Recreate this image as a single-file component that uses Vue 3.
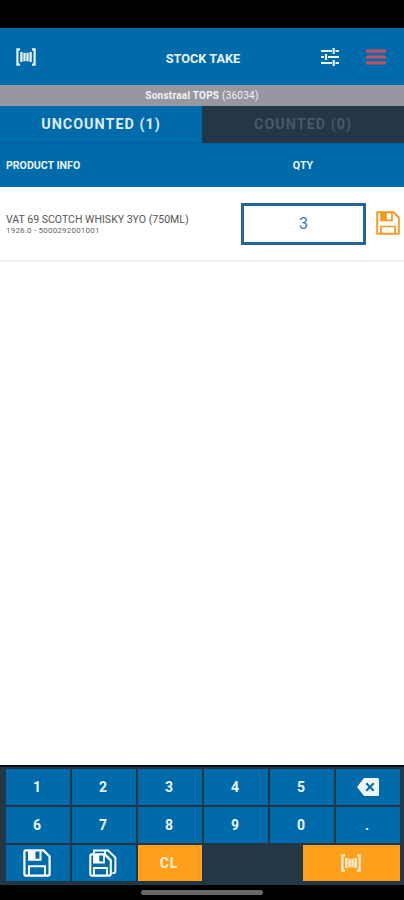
<template>
  <div class="screen">
    <div class="status-bar"></div>

    <header class="app-bar">
      <svg class="icon-scan" viewBox="0 0 20 18">
        <path d="M4 1.3H1.4v15.4H4M16 1.3h2.6v15.4H16" fill="none" stroke="currentColor" stroke-width="2.2" />
        <path d="M5.4 4v10M8.5 4.8v8.4M11.5 4.8v8.4M14.6 4v10" fill="none" stroke="currentColor" stroke-width="2.3" />
      </svg>
      <h1 class="title">STOCK TAKE</h1>
      <svg class="icon-tune" viewBox="0 0 20 20">
        <path d="M1 4h11M15.5 4H19M1 10h3M8 10h11M1 16h11M15.5 16H19" fill="none" stroke="currentColor" stroke-width="1.8" />
        <path d="M13.7 1v6M6 7v6M13.7 13v6" fill="none" stroke="currentColor" stroke-width="2.2" />
      </svg>
      <svg class="icon-menu" viewBox="0 0 20 16">
        <path d="M0 2.2h20M0 8h20M0 13.8h20" stroke="currentColor" stroke-width="3.2" />
      </svg>
    </header>

    <div class="store"><b>Sonstraal TOPS</b>&nbsp;(36034)</div>

    <nav class="tabs">
      <button
        v-for="tab in tabs"
        :key="tab.id"
        class="tab"
        :class="{ active: tab.id === activeTab }"
        @click="activeTab = tab.id"
      >
        <span>{{ tab.label }} ({{ tab.count }})</span>
      </button>
    </nav>

    <div class="table-head">
      <span class="col-info">PRODUCT INFO</span>
      <span class="col-qty">QTY</span>
    </div>

    <main class="list">
      <div v-for="item in items" :key="item.code" class="item">
        <div class="item-info">
          <div class="item-name">{{ item.name }}</div>
          <div class="item-code">{{ item.code }}</div>
        </div>
        <div class="qty">{{ item.qty }}</div>
        <svg class="icon-save" viewBox="0 0 24 24">
          <path d="M1.2 1.2h16.3l5.3 5.3v16.3H1.2z" fill="none" stroke="currentColor" stroke-width="1.9" stroke-linejoin="round" />
          <path d="M5 1.5v7.8h11V1.5M5 22.5v-7h14v7" fill="none" stroke="currentColor" stroke-width="1.7" />
          <path d="M5 1.5h5.8v7.3H5z" fill="currentColor" />
        </svg>
      </div>
    </main>

    <section class="keypad">
      <div v-for="(row, i) in keyRows" :key="i" class="key-row">
        <button v-for="key in row" :key="key" class="key">
          <svg v-if="key === 'back'" class="icon-back" viewBox="0 0 22 18">
            <path d="M7 0h13.5Q22 0 22 1.5v15Q22 18 20.5 18H7L0 9z" fill="currentColor" />
            <path d="M9.3 5.2l7.4 7.6M16.7 5.2l-7.4 7.6" stroke="#006bab" stroke-width="2" />
          </svg>
          <span v-else>{{ key }}</span>
        </button>
      </div>
      <div class="key-row">
        <button class="key">
          <svg class="icon-disk" viewBox="0 0 28 28">
            <path d="M3 1.4h17.5l6.1 6.1V25q0 1.6-1.6 1.6H3q-1.6 0-1.6-1.6V3Q1.4 1.4 3 1.4z" fill="none" stroke="currentColor" stroke-width="2.2" />
            <path d="M6 2v8.7h11.5V2M6 26v-8.7h16V26" fill="none" stroke="currentColor" stroke-width="2" />
            <path d="M6 2h6.5v8H6z" fill="currentColor" />
          </svg>
        </button>
        <button class="key">
          <svg class="icon-disks" viewBox="0 0 28 28">
            <path d="M5 4V1.4h14l7.4 7.2v13.5q0 2.2-3 2.2" fill="none" stroke="currentColor" stroke-width="2" />
            <path d="M2.8 5.4H16l5.8 5.8v13.9q0 1.5-1.5 1.5H2.8q-1.5 0-1.5-1.5V7q0-1.6 1.5-1.6z" fill="none" stroke="currentColor" stroke-width="2.1" />
            <path d="M5 6v7.5h10V6M5 26v-7h13v7M16 1.5V6l5 5" fill="none" stroke="currentColor" stroke-width="1.8" />
            <path d="M5 6h5.3v7H5z" fill="currentColor" />
          </svg>
        </button>
        <button class="key orange">CL</button>
        <button class="key orange scan">
          <svg class="icon-scan" viewBox="0 0 20 18">
            <path d="M4 1.3H1.4v15.4H4M16 1.3h2.6v15.4H16" fill="none" stroke="currentColor" stroke-width="2.2" />
            <path d="M5.4 4v10M8.5 4.8v8.4M11.5 4.8v8.4M14.6 4v10" fill="none" stroke="currentColor" stroke-width="2.3" />
          </svg>
        </button>
      </div>
    </section>

    <footer class="nav-bar"><div class="handle"></div></footer>
  </div>
</template>

<script setup>
import { ref } from 'vue'

const activeTab = ref('uncounted')

const tabs = [
  { id: 'uncounted', label: 'UNCOUNTED', count: 1 },
  { id: 'counted', label: 'COUNTED', count: 0 }
]

const items = ref([
  { name: 'VAT 69 SCOTCH WHISKY 3YO (750ML)', code: '1926.0 - 5000292001001', qty: 3 }
])

const keyRows = [
  ['1', '2', '3', '4', '5', 'back'],
  ['6', '7', '8', '9', '0', '.']
]
</script>

<style>
body {
  margin: 0;
}
</style>

<style scoped>
.screen {
  display: flex;
  flex-direction: column;
  width: 404px;
  height: 900px;
  overflow: hidden;
  background: #fff;
  font-family: Roboto, "Liberation Sans", sans-serif;
}

svg {
  display: block;
  flex: none;
}

button {
  border: 0;
  padding: 0;
  font-family: inherit;
}

.status-bar {
  height: 28px;
  background: #000;
}

.app-bar {
  display: grid;
  grid-template-columns: 150px 106px 84px 46px 18px;
  align-items: center;
  height: 57px;
  background: #006bab;
  color: #e9f3fa;
}

.app-bar .icon-scan {
  margin-left: 16px;
}

.icon-scan {
  width: 20px;
  height: 18px;
}

.title {
  margin: 4px 0 0;
  font-size: 12.7px;
  font-weight: 700;
  text-align: center;
  white-space: nowrap;
}

.icon-tune {
  width: 20px;
  height: 20px;
  justify-self: end;
}

.icon-menu {
  width: 20px;
  height: 16px;
  justify-self: end;
  color: #bd5364;
}

.store {
  display: flex;
  align-items: center;
  justify-content: center;
  height: 21px;
  padding-bottom: 1px;
  box-sizing: border-box;
  background: #96979f;
  color: #f2f2f4;
  font-size: 10px;
  letter-spacing: 0.24px;
}

.tabs {
  display: flex;
  height: 37px;
}

.tab {
  flex: 1;
  background: #233746;
  color: #46596a;
  font-size: 14.4px;
  font-weight: 700;
  letter-spacing: 1px;
}

.tab.active {
  background: #006bab;
  color: #dcebf5;
}

.table-head {
  display: flex;
  align-items: center;
  height: 43px;
  border-top: 1px solid #08609a;
  background: #006bab;
  color: #eaf4fb;
  font-size: 10.6px;
  font-weight: 700;
}

.col-info {
  width: 235px;
  padding-left: 6px;
}

.col-qty {
  width: 124px;
  text-align: center;
}

.list {
  flex: 1;
}

.item {
  display: flex;
  align-items: center;
  height: 73px;
  border-bottom: 2px solid #f1f1f1;
}

.item-info {
  width: 235px;
  padding: 1px 0 0 6px;
}

.item-name {
  color: #555;
  font-size: 10.55px;
  line-height: 12px;
  white-space: nowrap;
}

.item-code {
  color: #666;
  font-size: 8px;
  line-height: 9px;
  letter-spacing: 0.2px;
}

.qty {
  display: flex;
  align-items: center;
  justify-content: center;
  box-sizing: border-box;
  width: 125px;
  height: 42px;
  border: 3px solid #24679e;
  color: #3c7ba6;
  font-size: 16px;
}

.icon-save {
  width: 24px;
  height: 24px;
  margin-left: 10px;
  margin-top: -2px;
  color: #f8971a;
}

.keypad {
  display: flex;
  flex-direction: column;
  gap: 2px;
  box-sizing: border-box;
  height: 120px;
  padding: 2px 4px 0 6px;
  border-top: 2px solid #080f14;
  background: #233746;
}

.key-row {
  display: grid;
  grid-template-columns: repeat(6, 64px);
  column-gap: 2px;
  height: 36px;
}

.key {
  display: flex;
  align-items: center;
  justify-content: center;
  padding-right: 2px;
  background: #006bab;
  color: #eff6fb;
  font-size: 14px;
  font-weight: 700;
  box-shadow: 0 0 1px #0b3553;
}

.key.orange {
  background: #ff9f1c;
  color: #fff0d8;
  letter-spacing: 0.8px;
}

.key.scan {
  grid-column: 5 / 7;
  margin-left: 33px;
}

.icon-back {
  width: 22px;
  height: 18px;
  margin-left: 2px;
}

.icon-disk,
.icon-disks {
  width: 28px;
  height: 28px;
  color: #fff;
}

.nav-bar {
  display: flex;
  justify-content: center;
  height: 15px;
  background: #000;
}

.handle {
  width: 122px;
  height: 5px;
  margin-top: 5px;
  border-radius: 3px;
  background: #686868;
}
</style>
